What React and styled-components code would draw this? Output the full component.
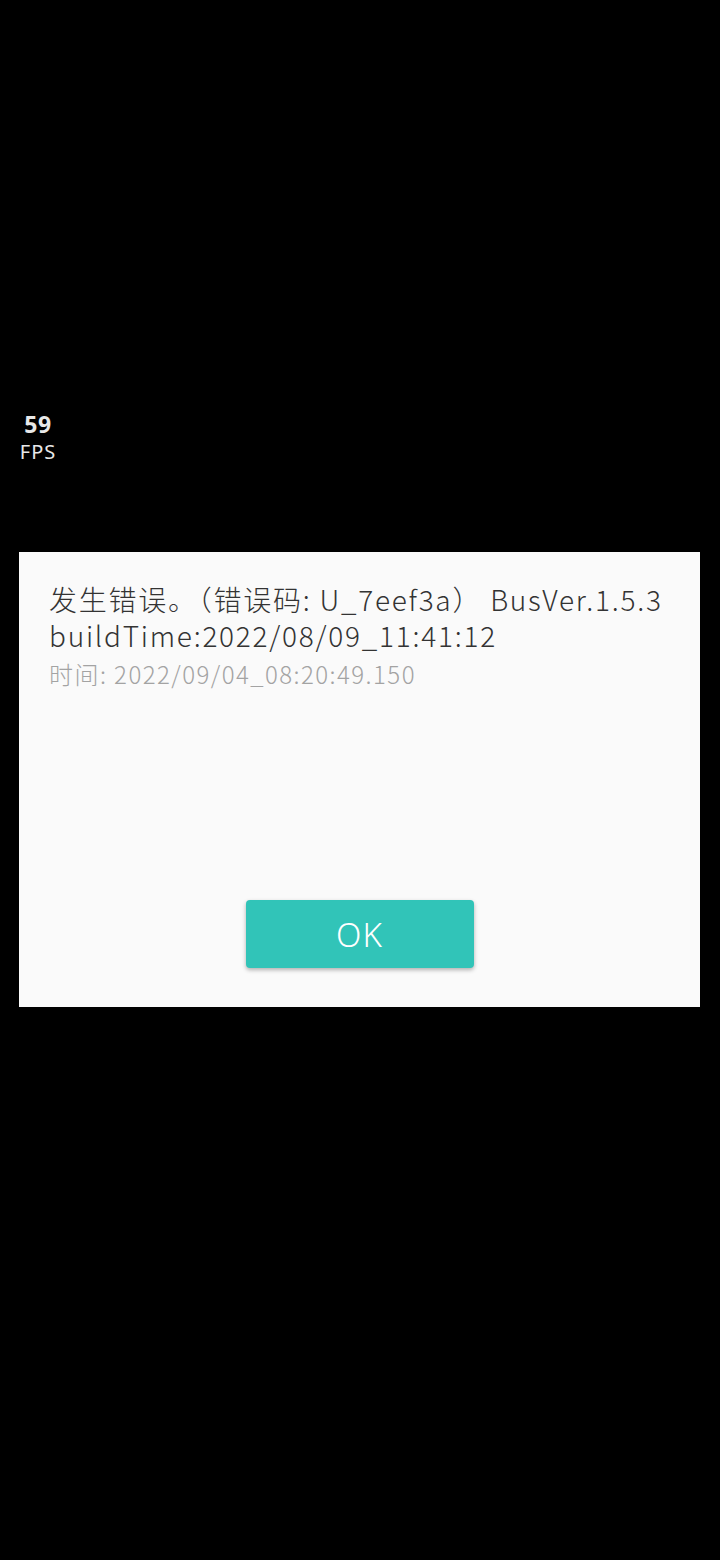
import styled, { createGlobalStyle } from "styled-components";

const GlobalStyle = createGlobalStyle`
  html, body {
    margin: 0;
    padding: 0;
    background: #000000;
  }
  body {
    font-family: "Noto Sans CJK SC", "Noto Sans", sans-serif;
  }
`;

const Screen = styled.div`
  position: relative;
  width: 720px;
  height: 1560px;
  background: #000000;
  padding-top: 552px;
  box-sizing: border-box;
`;

const FpsMeter = styled.div`
  position: absolute;
  left: 18px;
  top: 410px;
  width: 40px;
  display: flex;
  flex-direction: column;
  align-items: center;
  color: #e8e8e8;
  font-family: "Noto Sans", sans-serif;
  line-height: 1.25;
`;

const FpsValue = styled.span`
  font-size: 23px;
  font-weight: 700;
  letter-spacing: 0.5px;
`;

const FpsLabel = styled.span`
  font-size: 20px;
  font-weight: 400;
  letter-spacing: 1px;
`;

const Dialog = styled.div`
  margin: 0 20px 0 19px;
  height: 455px;
  background: #fafafa;
  box-sizing: border-box;
  padding: 29px 30px 39px 30px;
  display: flex;
  flex-direction: column;
`;

const Message = styled.div`
  flex: 1;
  color: #333333;
`;

const Line = styled.div`
  font-size: ${(p) => (p.$small ? "24px" : "28px")};
  line-height: ${(p) => (p.$small ? "42px" : "36px")};
  font-weight: 300;
  color: ${(p) => (p.$small ? "#a3a3a3" : "#333333")};
  white-space: nowrap;
  letter-spacing: ${(p) => (p.$small ? "1.45px" : "1.75px")};
`;

const OkButton = styled.button`
  align-self: center;
  width: 228px;
  height: 68px;
  border: none;
  border-radius: 4px;
  background: #31c4b8;
  color: #ffffff;
  font-family: "Noto Sans", sans-serif;
  font-size: 33px;
  font-weight: 300;
  letter-spacing: 1px;
  box-shadow: 0 2px 4px rgba(0, 0, 0, 0.3);
  cursor: pointer;
`;

export default function App() {
  return (
    <>
      <GlobalStyle />
      <Screen>
        <FpsMeter>
          <FpsValue>59</FpsValue>
          <FpsLabel>FPS</FpsLabel>
        </FpsMeter>
        <Dialog>
          <Message>
            <Line>发生错误。（错误码: U_7eef3a） BusVer.1.5.3</Line>
            <Line>buildTime:2022/08/09_11:41:12</Line>
            <Line $small>时间: 2022/09/04_08:20:49.150</Line>
          </Message>
          <OkButton>OK</OkButton>
        </Dialog>
      </Screen>
    </>
  );
}
